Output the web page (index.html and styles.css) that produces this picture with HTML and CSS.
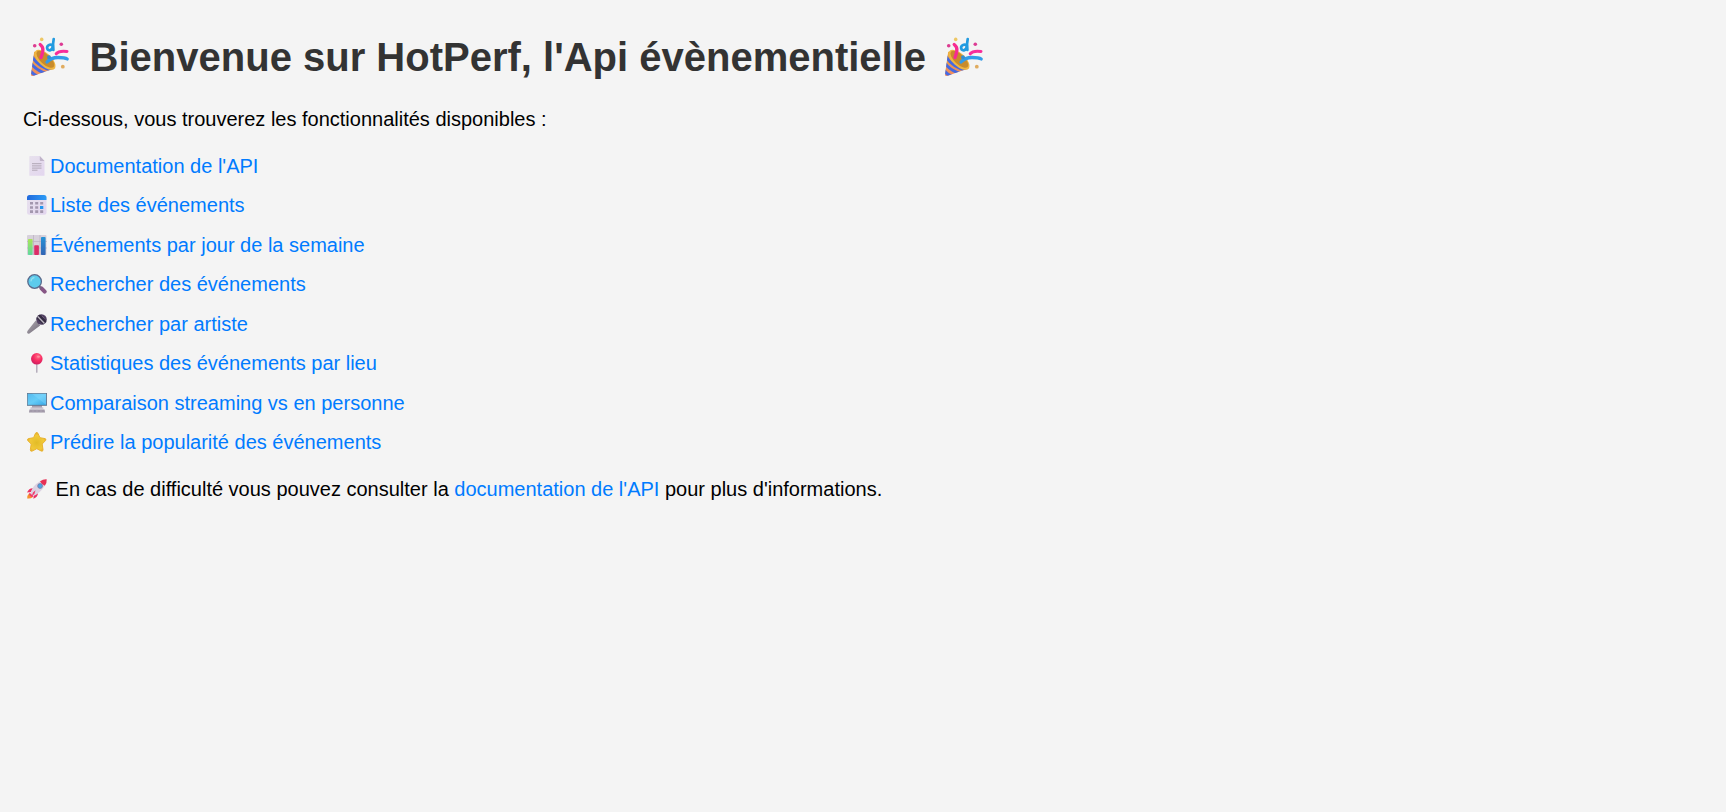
FILE: index.html
```
<!DOCTYPE html>
<html lang="fr">
<head>
<meta charset="utf-8">
<title>HotPerf</title>
<link rel="stylesheet" href="styles.css">
</head>
<body>
<svg class="defs" aria-hidden="true">
  <defs>
    <linearGradient id="cone" x1="0" y1="0" x2="0" y2="1"><stop offset="0" stop-color="#e8a73c"/><stop offset="1" stop-color="#f08a62"/></linearGradient>
    <linearGradient id="sky" x1="0" y1="0" x2="1" y2="1"><stop offset="0" stop-color="#55b9ee"/><stop offset=".5" stop-color="#66ccf7"/><stop offset="1" stop-color="#35a6e6"/></linearGradient>
    <linearGradient id="calTop"><stop offset="0" stop-color="#2169dc"/><stop offset="1" stop-color="#2c9cf6"/></linearGradient>
    <linearGradient id="paper" x1="0" y1="0" x2="1" y2="1"><stop offset="0" stop-color="#e7e1ed"/><stop offset="1" stop-color="#e3d6ef"/></linearGradient>
    <linearGradient id="greenBar" x1="0" y1="0" x2="0" y2="1"><stop offset="0" stop-color="#a9e558"/><stop offset="1" stop-color="#5fd8a0"/></linearGradient>
    <linearGradient id="blueBar" x1="0" y1="0" x2="0" y2="1"><stop offset="0" stop-color="#2592d6"/><stop offset="1" stop-color="#3264b4"/></linearGradient>
    <linearGradient id="handle" x1="0" y1="0" x2="1" y2="1"><stop offset="0" stop-color="#b2aeb4"/><stop offset="1" stop-color="#6d6574"/></linearGradient>
    <radialGradient id="ball" cx=".6" cy=".3" r=".7"><stop offset="0" stop-color="#ff7189"/><stop offset=".5" stop-color="#f92e63"/><stop offset="1" stop-color="#d01d60"/></radialGradient>
    <radialGradient id="gold" cx=".5" cy=".55" r=".55"><stop offset="0" stop-color="#e2bb27"/><stop offset=".7" stop-color="#f2c938"/><stop offset="1" stop-color="#e4a72d"/></radialGradient>
    <clipPath id="coneClip"><path d="M4.200 14.500 1 37.500q0 2 2 1.500L25.500 31Z"/></clipPath>
    <symbol id="party" viewBox="0 0 40 40">
      <path fill="url(#cone)" d="M4.200 14.500 1 37.500q0 2 2 1.500L25.500 31Z"/>
      <g clip-path="url(#coneClip)" fill="none" stroke="#4569e2" stroke-width="2.900"><path d="M1 18Q8 31 24 34M0 25Q6 34 18 37M-1 32Q3 38 9 39.500"/></g>
      <ellipse cx="15" cy="22.800" rx="13" ry="6.400" transform="rotate(43 15 22.800)" fill="#efb642"/>
      <ellipse cx="15.400" cy="22.300" rx="11.300" ry="4.900" transform="rotate(43 15.400 22.300)" fill="#c88b2c"/>
      <g fill="none" stroke-linecap="round" stroke-width="3.300">
        <path stroke="#f72b90" d="M10.200 7.500Q13.500 10 12.800 14T11 20.500"/>
        <path stroke="#329be8" d="M17 25Q21 20.500 28 20.500T37.200 22"/>
        <path stroke="#f82d9b" stroke-width="3" d="M26.200 16.800Q29 13.300 37 14.400"/>
        <path stroke="#229be0" stroke-width="2.700" d="M23.700 2Q22.500 7 23.400 13M23 8.500C20 6.200 16.500 8.800 17.200 11.500 18.200 14.700 22.800 13.500 22.700 9"/>
      </g>
      <circle cx="11.700" cy="2.400" r="1.800" fill="#edc765"/><circle cx="4.700" cy="8.700" r="1.800" fill="#dc3d91"/><circle cx="31.300" cy="7.300" r="1.800" fill="#dd3b94"/><circle cx="19" cy="20.200" r="1.900" fill="#318ed2"/><circle cx="32.800" cy="29.700" r="1.900" fill="#e0ac60"/>
    </symbol>
  </defs>
</svg>
<h1><svg class="party"><use href="#party"/></svg> Bienvenue sur HotPerf, l'Api évènementielle <svg class="party end"><use href="#party"/></svg></h1>
<p>Ci-dessous, vous trouverez les fonctionnalités disponibles :</p>
<ul>
  <li><svg class="icon" viewBox="0 0 20 20"><path fill="url(#paper)" d="M3 0H12.800L17.500 5V19.200q0 .6-.6.6H2.900q-.6 0-.6-.6V.6Q2.300 0 3 0Z"/><path fill="#c0b4c9" d="M12.800 0 17.500 5H13.500q-.7 0-.7-.7Z"/><path stroke="#b1a7b5" stroke-width="1" d="M5 7.700h9.500M5 9.900h9.500M5 12.100h9.500M5 14.200h5.500"/></svg><a>Documentation de l'API</a></li>
  <li><svg class="icon" viewBox="0 0 20 20"><rect y=".2" width="19.500" height="19.600" rx="2.500" fill="url(#paper)"/><path fill="url(#calTop)" d="M0 5V2.500Q0 0 2.500 0H17q2.500 0 2.500 2.500V5Z"/><g fill="#a397ae"><path d="M3 7h3v2.600H3zM8.200 7h3v2.600h-3zM13.200 7h3v2.600h-3zM3 11.200h3v2.600H3zM8.200 11.200h3v2.600h-3zM3 15.300h3v2.600H3zM8.200 15.300h3v2.600h-3zM13.200 15.300h3v2.600h-3z"/></g><path fill="#2395ee" d="M13 11h3.300v3H13z"/></svg><a>Liste des événements</a></li>
  <li><svg class="icon" viewBox="0 0 20 20"><rect width="19.500" height="20" rx="1" fill="#d7d1db"/><path stroke="#b9b0bf" stroke-width=".7" fill="none" d="M0 6.500h20M0 13h20M6.500 0v20M13 0v20"/><rect x="1" y="4" width="4.600" height="16" rx=".8" fill="url(#greenBar)"/><rect x="7.200" y="10.200" width="4.700" height="9.800" rx=".8" fill="#dc2d68"/><rect x="14" y="2" width="4.600" height="18" rx=".8" fill="url(#blueBar)"/></svg><a>Événements par jour de la semaine</a></li>
  <li><svg class="icon" viewBox="0 0 20 20"><path stroke="#875685" stroke-width="4" stroke-linecap="round" d="m14.500 14.300 3.200 3.300"/><path stroke="#75607f" stroke-width="2" d="m12 12 2.500 2.500"/><circle cx="7.600" cy="7.500" r="6.800" fill="#5ccbec" stroke="#59698b" stroke-width="1.300"/><path d="M4 7Q4.200 4.300 7 3.600" fill="none" stroke="#95dfef" stroke-width="1.200" stroke-linecap="round"/></svg><a>Rechercher des événements</a></li>
  <li><svg class="icon" viewBox="0 0 20 20"><path fill="url(#handle)" d="M8.700 6.500 13.200 11.500 2.500 19.500Q.8 20 .2 18.800-.2 18 .8 16.500Z"/><circle cx="14.500" cy="5.500" r="5.300" fill="#504061"/><path fill="#342b42" d="M9.400 4.200Q10.500 1 13 .4L19.300 7Q18.500 9.400 16 10.500Z"/><path stroke="#beb8c3" stroke-width="1.300" d="m10.500 2.300 7 7.200"/><path stroke="#75627f" stroke-width=".8" d="m15 2 2.500 2.500"/></svg><a>Rechercher par artiste</a></li>
  <li><svg class="icon" viewBox="0 0 20 20"><path stroke="#aaa1b2" stroke-width="1.300" stroke-linecap="round" d="M9.800 10v9.200"/><circle cx="9.800" cy="5.800" r="5.800" fill="url(#ball)"/><ellipse cx="11.500" cy="3.800" rx="1.500" ry="1" fill="#ff9aaa" opacity=".7"/></svg><a>Statistiques des événements par lieu</a></li>
  <li><svg class="icon" viewBox="0 0 20 20"><path fill="#a9a1b0" d="M5 12h10v3H5z"/><path fill="#c6bfcb" d="M3.500 14.300h12.800v1.500H3.500z"/><path fill="#9991a1" d="M2.500 16.500h15l.5 3H2z"/><path stroke="#b9b2c0" stroke-width=".5" d="M2.500 18h15M6 16.500v3M10 16.500v3M14 16.500v3"/><rect x=".2" y=".3" width="19.400" height="12" fill="url(#sky)" stroke="#60738b" stroke-width=".9"/><path fill="#8bdcff" opacity=".35" d="M5 .8h14v11Z"/></svg><a>Comparaison streaming vs en personne</a></li>
  <li><svg class="icon" viewBox="0 0 20 20"><path fill="url(#gold)" stroke="#e8b330" stroke-width="1" stroke-linejoin="round" d="M8.500 1.200Q9.700-.5 10.900 1.200L12.900 5.700 18 6.600Q19.700 7.200 18.500 8.600L15.200 12 16 17.700Q16 19.800 14.200 19L9.800 16.700 5.300 19Q3.300 19.800 3.400 17.700L4.200 12 .8 8.600Q-.2 7.200 1.400 6.600L6.600 5.700Z"/></svg><a>Prédire la popularité des événements</a></li>
</ul>
<p class="note"><svg class="icon" viewBox="0 0 20 20"><path fill="#f7902e" d="m2 14.500 4 3.500Q3.500 20 .2 19.500 0 16.500 2 14.500Z"/><path fill="#ea3163" d="M6 9.200Q2 9 0 13.500l4-.5ZM11 14Q11 18 6.300 19.700L7 16Z"/><path fill="#dcd2e2" d="M3.500 15.500Q4.500 7 13 2.200L17.800 6.800Q13 15 5.500 17.300Z"/><path fill="#e72f55" d="M13 2.200Q16 0 19.700.2 20 4 17.800 6.800 14.500 5.500 13 2.200Z"/><path fill="#f23a6b" d="M2.500 13.500 6.800 17.700 4.600 18 2 15.700ZM6 13.500l2.500-2.300-1 3.500-3 3Z"/><circle cx="13.100" cy="7" r="2.400" fill="#4aa5e5" stroke="#7777a2" stroke-width=".8"/></svg> En cas de difficulté vous pouvez consulter la <a>documentation de l'API</a> pour plus d'informations.</p>
</body>
</html>
```
FILE: styles.css
```
body {
  margin: 25px 23px;
  background: #f4f4f4;
  color: #000;
  font: 20px/23px Arial, "Liberation Sans", sans-serif;
}
.defs { position: absolute; width: 0; height: 0; }
h1 {
  margin: 0;
  padding-top: 9px;
  color: #333;
  font-size: 40px;
  line-height: 46px;
}
.party {
  width: 40px;
  height: 40px;
  margin: 0 8.500px 0 7px;
  vertical-align: -6px;
}
.icon {
  width: 20px;
  height: 20px;
  margin: 0 3px 0 4px;
  vertical-align: -3px;
}
.party.end { margin-left: 6.500px; }
p { margin: 28px 0 23.600px; }
ul { list-style: none; margin: 0; padding: 0; }
li { height: 23px; margin-bottom: 16.500px; }
.note { margin-top: 23.900px; }
a { color: #007bff; text-decoration: none; }
```
